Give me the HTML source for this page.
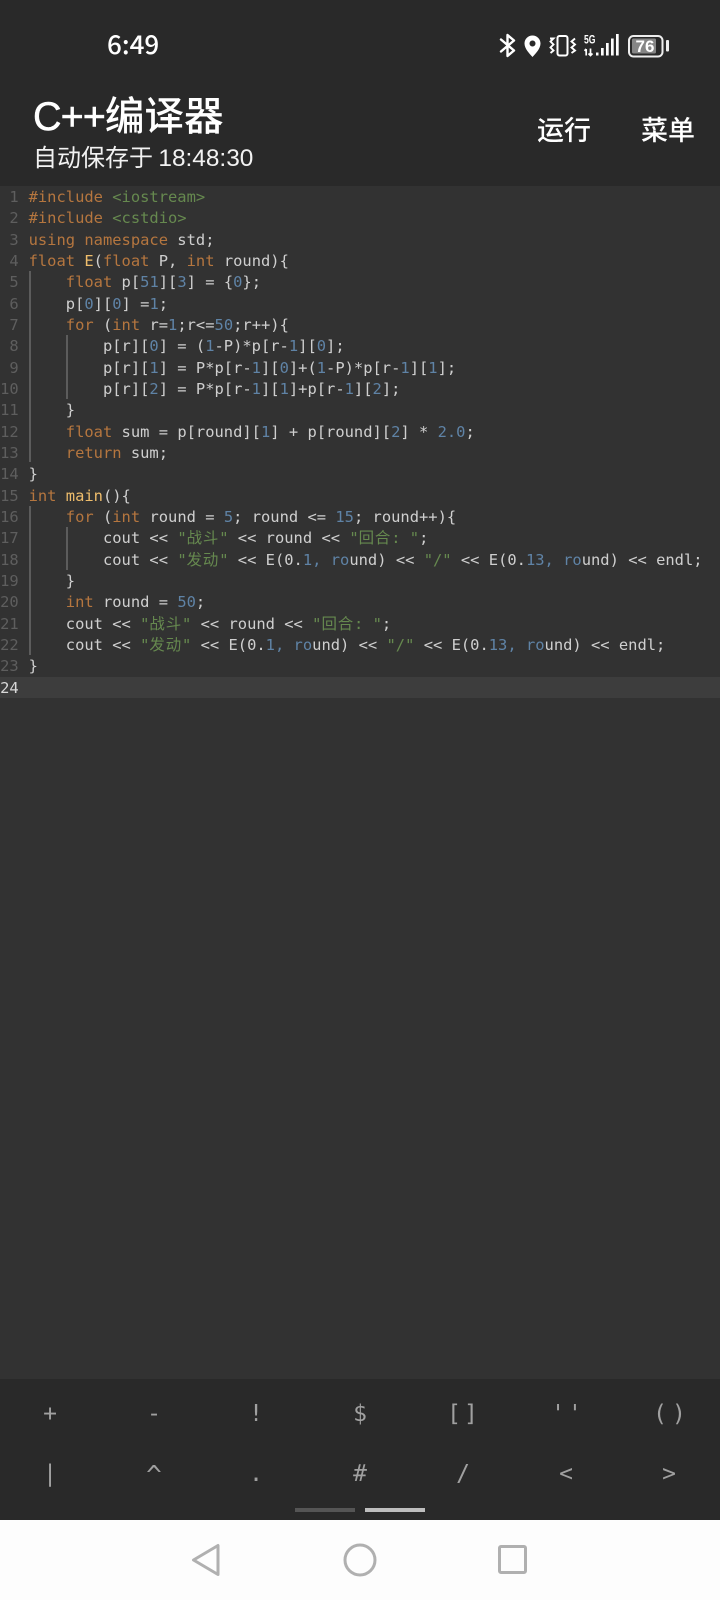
<!DOCTYPE html>
<html><head><meta charset="utf-8">
<style>
html,body{margin:0;padding:0;background:#292929}
#p{position:relative;width:720px;height:1600px;overflow:hidden;background:#292929;font-family:"Noto Sans CJK SC","Liberation Sans",sans-serif;color:#fff}
.a{position:absolute;white-space:pre}
#ed{position:absolute;left:0;top:186px;width:720px;height:1193px;background:#323232}
#act{position:absolute;left:0;top:676.7px;width:720px;height:21.6px;background:#3d3d3d}
.l,.n{position:absolute;font:15.45px/21.33px "DejaVu Sans Mono","Noto Sans CJK SC",monospace;white-space:pre;height:21.33px;margin-top:1px}
.l{left:28.6px;color:#cfcfcf}
.n{left:0;width:18.7px;text-align:right;color:#5e5e5e}
.k{color:#b5763f}.s{color:#66894f}.d{color:#5f83a6}.f{color:#eebd6c}
i{font-style:normal;display:inline-block;width:16.3px;text-align:left}
.g{position:absolute;width:2px;background:#5c5c5c}
.b{position:absolute;width:60px;text-align:center;font:23px/30px "DejaVu Sans Mono",monospace;color:#a0a0a0;white-space:pre;margin-top:2px}
</style></head><body><div id="p">
<div class="a" style="left:107px;top:27px;font-size:26px;line-height:34px;font-weight:500;color:#fff">6:49</div>
<svg class="a" style="left:0;top:0" width="720" height="70" viewBox="0 0 720 70">
<path d="M501 39.500L514 50.500 507.500 56V35L514 40.500 501 51.500" fill="none" stroke="#fff" stroke-width="2.400" stroke-linejoin="round" stroke-linecap="round"/>
<path fill-rule="evenodd" d="M532.500 35.500c4.500 0 8 3.500 8 8 0 5.200-4.800 10-8 13.500-3.200-3.500-8-8.300-8-13.500 0-4.500 3.500-8 8-8zM532.500 40.500a3 3 0 1 0 .01 0z" fill="#fff"/>
<rect x="557.500" y="36" width="10" height="19.500" rx="2" fill="none" stroke="#fff" stroke-width="2"/>
<path d="M550 38.500h3.500l-3 3 3 3-3 3 3 3-3 2.500M575 38.500l-3.500 3 3.500 3-3.500 3 3.500 3-3.500 2.500" fill="none" stroke="#fff" stroke-width="1.900"/>
<text x="584" y="43.500" font-family="Liberation Sans" font-size="11.500" font-weight="bold" fill="#fff" textLength="11.500" lengthAdjust="spacingAndGlyphs">5G</text>
<path d="M586.200 49v6.500M584.500 50.800l1.700-1.800M590.500 48.500v7M588.500 53.500l2 2 2-2" fill="none" stroke="#fff" stroke-width="1.700"/>
<path d="M596 52.500h2.500V55.500H596zM601 48h2.700v7.500H601zM606 43h2.700v12.500H606zM611 38.500h2.700v17H611zM616 34h2.700v21.500H616z" fill="#fff"/>
<rect x="632" y="38.500" width="24" height="15" rx="1.500" fill="#858585"/>
<rect x="629" y="36" width="33.500" height="20.500" rx="4.500" fill="none" stroke="#eee" stroke-width="2"/>
<rect x="666" y="40" width="3" height="11.500" rx="1" fill="#eee"/>
<text x="645" y="52" text-anchor="middle" font-family="Liberation Sans" font-size="17" font-weight="bold" fill="#fff">76</text>
</svg>
<div class="a" style="left:33px;top:89px;font-size:39.600px;line-height:50px;font-weight:500"><span style="font-family:'Liberation Sans',sans-serif;font-weight:400;-webkit-text-stroke:.5px #fff;letter-spacing:-1px">C++</span>编译器</div>
<div class="a" style="left:33px;top:140px;font-size:24px;line-height:32px;color:#f2f2f2">自动保存于 <span style="font-family:'Liberation Sans',sans-serif;font-size:24.400px">18:48:30</span></div>
<div class="a" style="left:537px;top:110px;font-size:27px;line-height:38px;font-weight:500">运行</div>
<div class="a" style="left:641px;top:110px;font-size:27px;line-height:38px;font-weight:500">菜单</div>

<div id="ed"></div>
<div id="act"></div>
<div class="g" style="left:28.500px;top:271px;height:191px"></div>
<div class="g" style="left:28.500px;top:506px;height:149px"></div>
<div class="g" style="left:65.500px;top:335px;height:64px"></div>
<div class="g" style="left:65.500px;top:527px;height:43px"></div>

<div class="n" style="top:186px">1</div><div class="l" style="top:186px"><span class="k">#include</span> <span class="s">&lt;iostream&gt;</span></div>
<div class="n" style="top:207.330px">2</div><div class="l" style="top:207.330px"><span class="k">#include</span> <span class="s">&lt;cstdio&gt;</span></div>
<div class="n" style="top:228.670px">3</div><div class="l" style="top:228.670px"><span class="k">using namespace</span> std;</div>
<div class="n" style="top:250px">4</div><div class="l" style="top:250px"><span class="k">float</span> <span class="f">E</span>(<span class="k">float</span> P, <span class="k">int</span> round){</div>
<div class="n" style="top:271.330px">5</div><div class="l" style="top:271.330px">    <span class="k">float</span> p[<span class="d">51</span>][<span class="d">3</span>] = {<span class="d">0</span>};</div>
<div class="n" style="top:292.670px">6</div><div class="l" style="top:292.670px">    p[<span class="d">0</span>][<span class="d">0</span>] =<span class="d">1</span>;</div>
<div class="n" style="top:314px">7</div><div class="l" style="top:314px">    <span class="k">for</span> (<span class="k">int</span> r=<span class="d">1</span>;r&lt;=<span class="d">50</span>;r++){</div>
<div class="n" style="top:335.330px">8</div><div class="l" style="top:335.330px">        p[r][<span class="d">0</span>] = (<span class="d">1</span>-P)*p[r-<span class="d">1</span>][<span class="d">0</span>];</div>
<div class="n" style="top:356.670px">9</div><div class="l" style="top:356.670px">        p[r][<span class="d">1</span>] = P*p[r-<span class="d">1</span>][<span class="d">0</span>]+(<span class="d">1</span>-P)*p[r-<span class="d">1</span>][<span class="d">1</span>];</div>
<div class="n" style="top:378px">10</div><div class="l" style="top:378px">        p[r][<span class="d">2</span>] = P*p[r-<span class="d">1</span>][<span class="d">1</span>]+p[r-<span class="d">1</span>][<span class="d">2</span>];</div>
<div class="n" style="top:399.330px">11</div><div class="l" style="top:399.330px">    }</div>
<div class="n" style="top:420.670px">12</div><div class="l" style="top:420.670px">    <span class="k">float</span> sum = p[round][<span class="d">1</span>] + p[round][<span class="d">2</span>] * <span class="d">2.0</span>;</div>
<div class="n" style="top:442px">13</div><div class="l" style="top:442px">    <span class="k">return</span> sum;</div>
<div class="n" style="top:463.330px">14</div><div class="l" style="top:463.330px">}</div>
<div class="n" style="top:484.670px">15</div><div class="l" style="top:484.670px"><span class="k">int</span> <span class="f">main</span>(){</div>
<div class="n" style="top:506px">16</div><div class="l" style="top:506px">    <span class="k">for</span> (<span class="k">int</span> round = <span class="d">5</span>; round &lt;= <span class="d">15</span>; round++){</div>
<div class="n" style="top:527.330px">17</div><div class="l" style="top:527.330px">        cout &lt;&lt; <span class="s">"<i>战</i><i>斗</i>"</span> &lt;&lt; round &lt;&lt; <span class="s">"<i>回</i><i>合</i>: "</span>;</div>
<div class="n" style="top:548.670px">18</div><div class="l" style="top:548.670px">        cout &lt;&lt; <span class="s">"<i>发</i><i>动</i>"</span> &lt;&lt; E(0.<span class="d">1, ro</span>und) &lt;&lt; <span class="s">"/"</span> &lt;&lt; E(0.<span class="d">13, ro</span>und) &lt;&lt; endl;</div>
<div class="n" style="top:570px">19</div><div class="l" style="top:570px">    }</div>
<div class="n" style="top:591.330px">20</div><div class="l" style="top:591.330px">    <span class="k">int</span> round = <span class="d">50</span>;</div>
<div class="n" style="top:612.670px">21</div><div class="l" style="top:612.670px">    cout &lt;&lt; <span class="s">"<i>战</i><i>斗</i>"</span> &lt;&lt; round &lt;&lt; <span class="s">"<i>回</i><i>合</i>: "</span>;</div>
<div class="n" style="top:634px">22</div><div class="l" style="top:634px">    cout &lt;&lt; <span class="s">"<i>发</i><i>动</i>"</span> &lt;&lt; E(0.<span class="d">1, ro</span>und) &lt;&lt; <span class="s">"/"</span> &lt;&lt; E(0.<span class="d">13, ro</span>und) &lt;&lt; endl;</div>
<div class="n" style="top:655.330px">23</div><div class="l" style="top:655.330px">}</div>
<div class="n" style="top:676.670px;color:#d8d8d8">24</div>

<div class="b" style="left:20px;top:1397px">+</div>
<div class="b" style="left:124px;top:1397px">-</div>
<div class="b" style="left:226px;top:1397px">!</div>
<div class="b" style="left:330px;top:1397px">$</div>
<div class="b" style="left:434px;top:1397px;letter-spacing:3px">[]</div>
<div class="b" style="left:538px;top:1397px;letter-spacing:3px;font-style:italic">''</div>
<div class="b" style="left:642px;top:1397px;letter-spacing:5px">()</div>
<div class="b" style="left:20px;top:1457px">|</div>
<div class="b" style="left:124px;top:1459px;font-size:26px">^</div>
<div class="b" style="left:226px;top:1457px">.</div>
<div class="b" style="left:330px;top:1457px">#</div>
<div class="b" style="left:433px;top:1457px">/</div>
<div class="b" style="left:536px;top:1457px">&lt;</div>
<div class="b" style="left:639px;top:1457px">&gt;</div>

<div class="a" style="left:295px;top:1508px;width:60px;height:4px;background:#555"></div>
<div class="a" style="left:365px;top:1508px;width:60px;height:4px;background:#bdbdbd"></div>

<div class="a" style="left:0;top:1520px;width:720px;height:80px;background:#fdfdfd"></div>
<svg class="a" style="left:0;top:1520px" width="720" height="80" viewBox="0 1520 720 80">
<path d="M193.500 1560L218 1545.500V1574.500Z" fill="none" stroke="#b0b0b0" stroke-width="3" stroke-linejoin="round"/>
<circle cx="360" cy="1560" r="15" fill="none" stroke="#b0b0b0" stroke-width="3"/>
<rect x="499.500" y="1546.500" width="26" height="26" rx="1.500" fill="none" stroke="#b0b0b0" stroke-width="3"/>
</svg>
</div></body></html>
